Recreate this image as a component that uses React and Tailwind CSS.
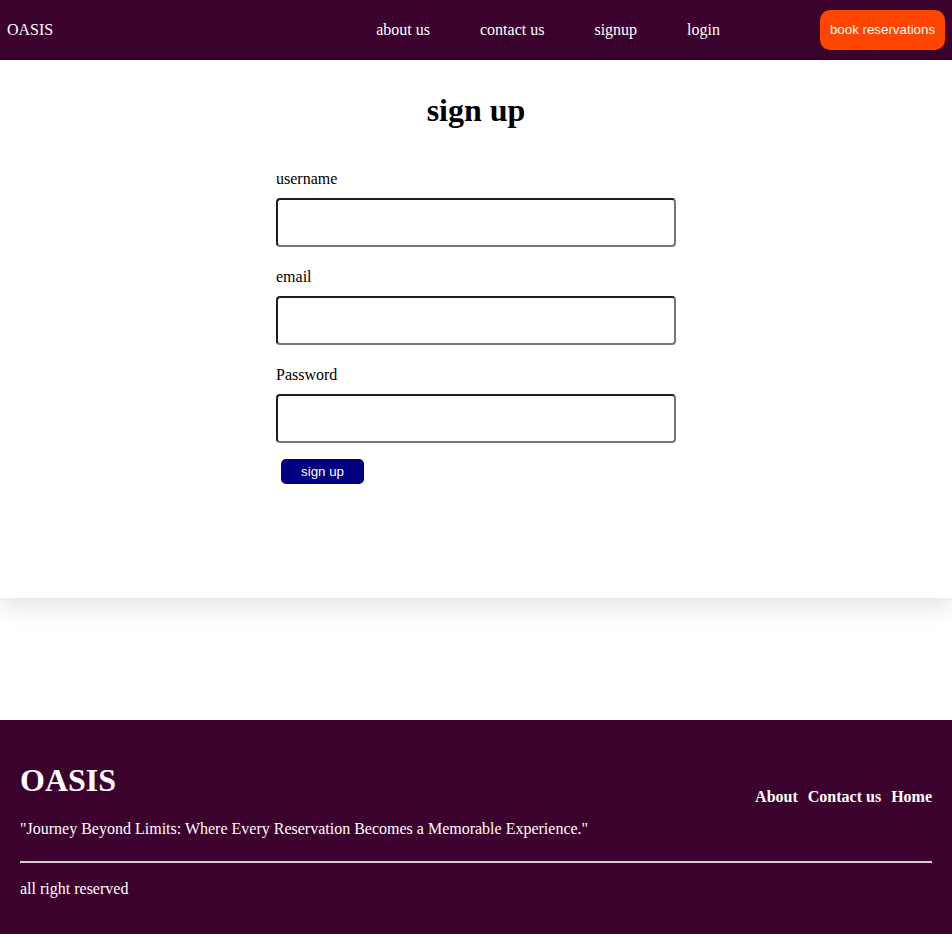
import React from "react";

const serif = "font-['Liberation_Serif',_'Times_New_Roman',_serif]";
const sans = "font-['Liberation_Sans',_Arial,_sans-serif]";

function Navbar() {
  return (
    <nav className={`flex h-[60px] items-center bg-[#3c022e] pl-[7px] pr-[7px] text-white ${serif}`}>
      <a className="text-base leading-[18px]">OASIS</a>
      <ul className="ml-auto flex gap-[50px] text-base leading-[18px]">
        <li>about us</li>
        <li>contact us</li>
        <li>signup</li>
        <li>login</li>
      </ul>
      <button
        className={`ml-[100px] h-10 w-[125px] rounded-[10px] bg-[#ff4500] text-[13.33px] text-white ${sans}`}
      >
        book reservations
      </button>
    </nav>
  );
}

function Field({ label, type = "text" }) {
  return (
    <div className="flex flex-col">
      <label className="mb-[10px] text-base leading-[18px]">{label}</label>
      <input
        type={type}
        className="h-[49px] w-[400px] rounded-[4px] border-2 border-t-[#1f1f1f] border-l-[#1f1f1f] border-r-[#767676] border-b-[#767676] bg-white px-2 outline-none"
      />
    </div>
  );
}

// Signup form
function SignupForm() {
  return (
    <main className={`h-[538px] bg-white pt-[32px] text-black shadow-[0_8px_24px_rgba(0,0,0,0.12)] ${serif}`}>
      <h1 className="text-center text-[32px] font-bold leading-[37px]">sign up</h1>
      <form className="mx-auto mt-[41px] flex w-[400px] flex-col gap-[21px]">
        <Field label="username" />
        <Field label="email" type="email" />
        <Field label="Password" type="password" />
      </form>
      <div className="mx-auto w-[400px]">
        <button
          className={`ml-[5px] mt-4 h-[25px] w-[83px] rounded-[5px] bg-[#000080] text-[13.33px] text-white ${sans}`}
        >
          sign up
        </button>
      </div>
    </main>
  );
}

function Footer() {
  return (
    <footer className={`h-[214px] bg-[#3c022e] px-5 pt-[42px] text-white ${serif}`}>
      <div className="flex items-start justify-between">
        <h2 className="text-[32px] font-bold leading-[37px]">OASIS</h2>
        <ul className="mt-[26px] flex gap-[10px] text-base font-bold leading-[18px]">
          <li>About</li>
          <li>Contact us</li>
          <li>Home</li>
        </ul>
      </div>
      <p className="mt-[14px] text-base leading-[18px]">
        "Journey Beyond Limits: Where Every Reservation Becomes a Memorable Experience."
      </p>
      <hr className="mt-[23px] border-t-2 border-[#cfcfcf]" />
      <p className="mt-[17px] text-base leading-[18px]">all right reserved</p>
    </footer>
  );
}

export default function App() {
  return (
    <div className="min-h-[934px] bg-white">
      <Navbar />
      <SignupForm />
      <div className="h-[122px]" />
      <Footer />
    </div>
  );
}
